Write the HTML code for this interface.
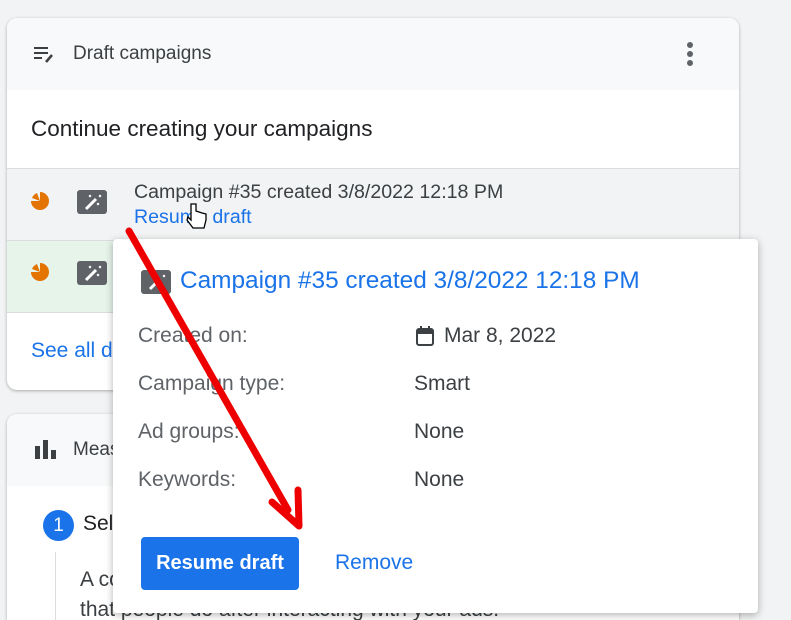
<!DOCTYPE html>
<html style="height:620px;overflow:hidden"><head><style>
body{margin:0;width:791px;height:620px;background:#f1f3f4;font-family:"Liberation Sans",sans-serif;position:relative;overflow:hidden}
.card{position:absolute;left:7px;width:732px;background:#fff;border-radius:10px;box-shadow:0 1px 3px rgba(0,0,0,.3);overflow:hidden}
.abs{position:absolute}
.mag{position:absolute;width:30px;height:24px;background:#5f6368;border-radius:3px}
.dot{position:absolute;width:18px;height:18px}
.lbl{position:absolute;left:25px;font-size:21px;color:#5f6368}
.val{position:absolute;left:301px;font-size:21px;color:#3c4043}
</style></head><body>
<div class="card" style="top:18px;height:372px">
 <div class="abs" style="left:0;top:0;width:732px;height:72px;background:#f8f9fa"></div>
 <svg class="abs" style="left:25px;top:26px" width="24" height="20" viewBox="0 0 24 20"><path d="M2 4h14M2 9h14M2 14h8" stroke="#3c4043" stroke-width="2"/><path d="M14 18l6-7" stroke="#3c4043" stroke-width="2.5"/></svg>
 <div class="abs" style="left:66px;top:25px;font-size:19px;color:#3c4043">Draft campaigns</div>
 <div class="abs" style="left:680px;top:24px;width:6px;height:6px;border-radius:3px;background:#5f6368;box-shadow:0 9px 0 #5f6368,0 18px 0 #5f6368"></div>
 <div class="abs" style="left:24px;top:98px;font-size:22.5px;color:#202124">Continue creating your campaigns</div>
 <div class="abs" style="left:0;top:150px;width:732px;height:72px;background:#f1f3f4;border-top:1px solid #dadce0"></div>
 <div class="abs" style="left:0;top:222px;width:732px;height:71px;background:#e6f4ea;border-top:1px solid #dadce0;border-bottom:1px solid #dadce0"></div>
 <svg class="dot" style="left:24px;top:174px" viewBox="0 0 18 18"><path d="M9 9L9 0A9 9 0 1 1 0 9Z" fill="#e37400"/><path d="M9 9L1 6A9 9 0 0 1 6 1Z" fill="#e37400"/></svg>
 <svg class="dot" style="left:24px;top:245px" viewBox="0 0 18 18"><path d="M9 9L9 0A9 9 0 1 1 0 9Z" fill="#e37400"/><path d="M9 9L1 6A9 9 0 0 1 6 1Z" fill="#e37400"/></svg>
 <div class="mag" style="left:70px;top:172px"><svg width="30" height="24"><path d="M9 19l10-10" stroke="#fff" stroke-width="3"/><path d="M12 5l2 2M14 5l-2 2M20 13l2 2M22 13l-2 2M22 5l2 2M24 5l-2 2" stroke="#fff" stroke-width="1"/></svg></div>
 <div class="mag" style="left:70px;top:243px"><svg width="30" height="24"><path d="M9 19l10-10" stroke="#fff" stroke-width="3"/><path d="M12 5l2 2M14 5l-2 2M20 13l2 2M22 13l-2 2M22 5l2 2M24 5l-2 2" stroke="#fff" stroke-width="1"/></svg></div>
 <div class="abs" style="left:127px;top:163px;font-size:19.6px;color:#3c4043">Campaign #35 created 3/8/2022 12:18 PM</div>
 <div class="abs" style="left:127px;top:188px;font-size:19.6px;color:#1a73e8">Resume draft</div>
 <div class="abs" style="left:24px;top:321px;font-size:21px;color:#1a73e8">See all drafts</div>
</div>
<div class="card" style="top:414px;height:206px;border-radius:10px 10px 0 0">
 <div class="abs" style="left:0;top:0;width:732px;height:72px;background:#f8f9fa"></div>
 <svg class="abs" style="left:28px;top:26px" width="22" height="20"><rect x="0" y="6" width="5" height="13" fill="#3c4043"/><rect x="8" y="0" width="5" height="19" fill="#3c4043"/><rect x="16" y="10" width="5" height="9" fill="#3c4043"/></svg>
 <div class="abs" style="left:66px;top:25px;font-size:19px;color:#3c4043">Measure conversions</div>
 <div class="abs" style="left:36px;top:96px;width:31px;height:31px;border-radius:50%;background:#1a73e8;color:#fff;font-size:19px;text-align:center;line-height:31px">1</div>
 <div class="abs" style="left:76px;top:98px;font-size:21px;color:#202124">Select</div>
 <div class="abs" style="left:48px;top:138px;width:1px;height:68px;background:#dadce0"></div>
 <div class="abs" style="left:73px;top:151px;font-size:21px;color:#3c4043;line-height:30px">A conversion is an action<br>that people do after interacting with your ads.</div>
</div>
<div class="abs" style="left:113px;top:239px;width:645px;height:374px;background:#fff;border-radius:4px;box-shadow:0 2px 8px rgba(0,0,0,.3)">
 <div class="mag" style="left:28px;top:31px"><svg width="30" height="24"><path d="M9 19l10-10" stroke="#fff" stroke-width="3"/><path d="M22 5l2 2M24 5l-2 2" stroke="#fff" stroke-width="1"/></svg></div>
 <div class="abs" style="left:67px;top:28px;font-size:24.4px;color:#1a73e8">Campaign #35 created 3/8/2022 12:18 PM</div>
 <div class="lbl" style="top:85px">Created on:</div>
 <svg class="abs" style="left:302px;top:86px" width="20" height="22"><rect x="2" y="4" width="16" height="16" rx="2" fill="none" stroke="#3c4043" stroke-width="2"/><rect x="2" y="4" width="16" height="5" fill="#3c4043"/><path d="M6 1v4M14 1v4" stroke="#3c4043" stroke-width="2"/></svg>
 <div class="val" style="left:331px;top:85px">Mar 8, 2022</div>
 <div class="lbl" style="top:133px">Campaign type:</div><div class="val" style="top:133px">Smart</div>
 <div class="lbl" style="top:181px">Ad groups:</div><div class="val" style="top:181px">None</div>
 <div class="lbl" style="top:229px">Keywords:</div><div class="val" style="top:229px">None</div>
 <div class="abs" style="left:28px;top:298px;width:158px;height:53px;background:#1a73e8;border-radius:4px;color:#fff;font-size:20px;font-weight:bold;text-align:center;line-height:53px">Resume draft</div>
 <div class="abs" style="left:222px;top:312px;font-size:21px;color:#1a73e8">Remove</div>
</div>
<svg class="abs" style="left:0;top:0" width="791" height="620"><path d="M129 231L288 510" stroke="#e00" stroke-width="7" stroke-linecap="round"/><path d="M272 502L299 526L298 490" fill="none" stroke="#e00" stroke-width="7" stroke-linecap="round" stroke-linejoin="round"/></svg>
<svg class="abs" style="left:186px;top:202px" width="24" height="30"><path d="M5 2v16l-3-3-1 3 6 8h11l2-8v-6l-4-1-3-1-3-1V2z" fill="#fff" stroke="#000" stroke-width="1.3"/></svg>
</body></html>
